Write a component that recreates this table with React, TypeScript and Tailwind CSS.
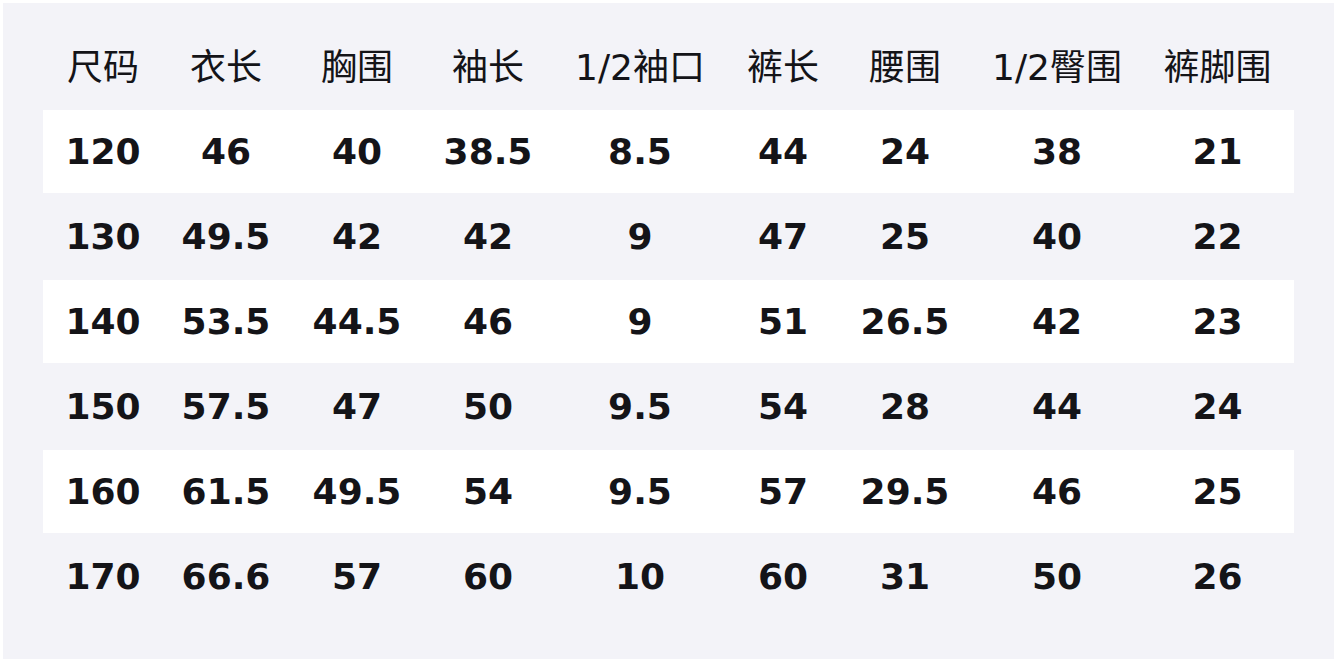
import React from "react";

const headers = ["尺码", "衣长", "胸围", "袖长", "1/2袖口", "裤长", "腰围", "1/2臀围", "裤脚围"];
const rows = [
  ["120", "46", "40", "38.5", "8.5", "44", "24", "38", "21"],
  ["130", "49.5", "42", "42", "9", "47", "25", "40", "22"],
  ["140", "53.5", "44.5", "46", "9", "51", "26.5", "42", "23"],
  ["150", "57.5", "47", "50", "9.5", "54", "28", "44", "24"],
  ["160", "61.5", "49.5", "54", "9.5", "57", "29.5", "46", "25"],
  ["170", "66.6", "57", "60", "10", "60", "31", "50", "26"],
];

const cols = "grid grid-cols-[120px_126px_136px_126px_178px_108px_136px_168px_153px]";

export default function App() {
  return (
    <div className="w-[1337px] h-[663px] bg-white pt-[3px] pl-[3px]" style={{ fontFamily: '"DejaVu Sans", "Noto Sans CJK SC", sans-serif' }}>
      <div className="w-[1331px] h-[656px] bg-[#f3f3f8] pt-[22px] pl-[40px] pr-[40px] text-[#141418]">
        <div className="flex flex-col gap-[2px]">
          <div className={`${cols} h-[83px] items-center text-[36px] font-normal`}>
            {headers.map((h) => (
              <div key={h} className="text-center leading-none pt-[2px]">{h}</div>
            ))}
          </div>
          {rows.map((r, i) => (
            <div key={i} className={`${cols} h-[83px] items-center text-[36px] font-bold ${i % 2 === 0 ? "bg-white" : ""}`}>
              {r.map((c, j) => (
                <div key={j} className="text-center leading-none">{c}</div>
              ))}
            </div>
          ))}
        </div>
      </div>
    </div>
  );
}
